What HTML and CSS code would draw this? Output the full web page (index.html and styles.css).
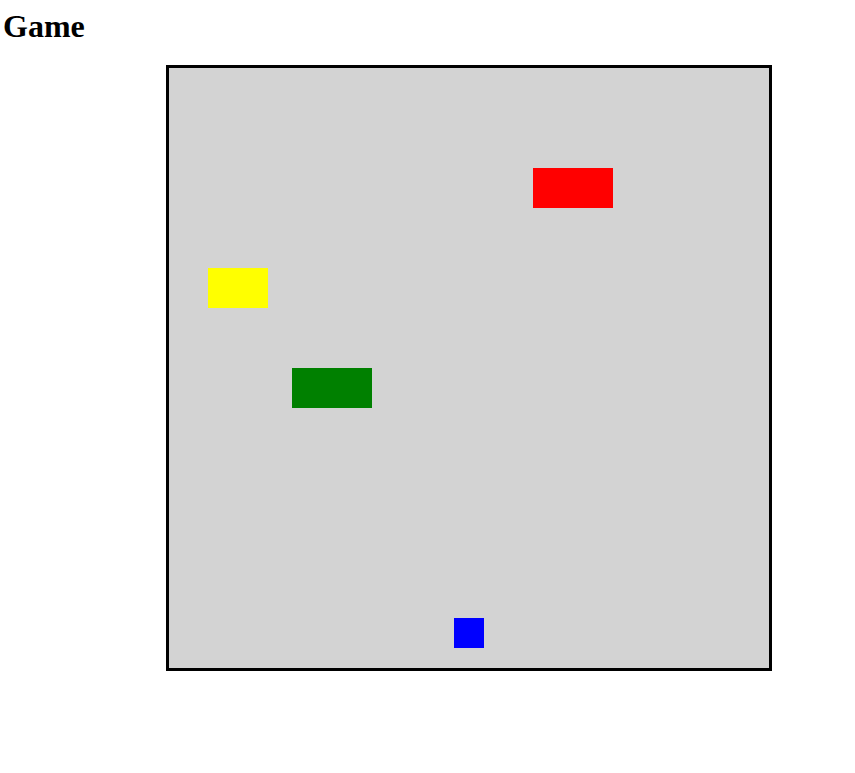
FILE: index.html
```html
<!DOCTYPE html>
<html>
<head>
<meta charset="utf-8">
<title>Game</title>
<link rel="stylesheet" href="styles.css">
</head>
<body>
<h1 class="title">Game</h1>
<div class="board">
  <div class="piece red" style="left:364px;top:100px"></div>
  <div class="piece yellow" style="left:39px;top:200px"></div>
  <div class="piece green" style="left:123px;top:300px"></div>
  <div class="piece blue" style="left:285px;top:550px"></div>
</div>
</body>
</html>
```

FILE: styles.css
```css
html, body {
  margin: 0;
  padding: 0;
  background: #ffffff;
}
body {
  font-family: "Liberation Serif", "Times New Roman", serif;
  color: #000;
}
.title {
  margin: 8px 0 0 3px;
  font-size: 32px;
  line-height: 37px;
  font-weight: bold;
}
.board {
  position: relative;
  margin: 20px 0 0 166px;
  width: 600px;
  height: 600px;
  border: 3px solid #000;
  background: #d3d3d3;
}
.piece {
  position: absolute;
  width: 80px;
  height: 40px;
}
.red { background: #ff0000; }
.yellow { background: #ffff00; width: 60px; }
.green { background: #008000; }
.blue { background: #0000ff; width: 30px; height: 30px; }
```
